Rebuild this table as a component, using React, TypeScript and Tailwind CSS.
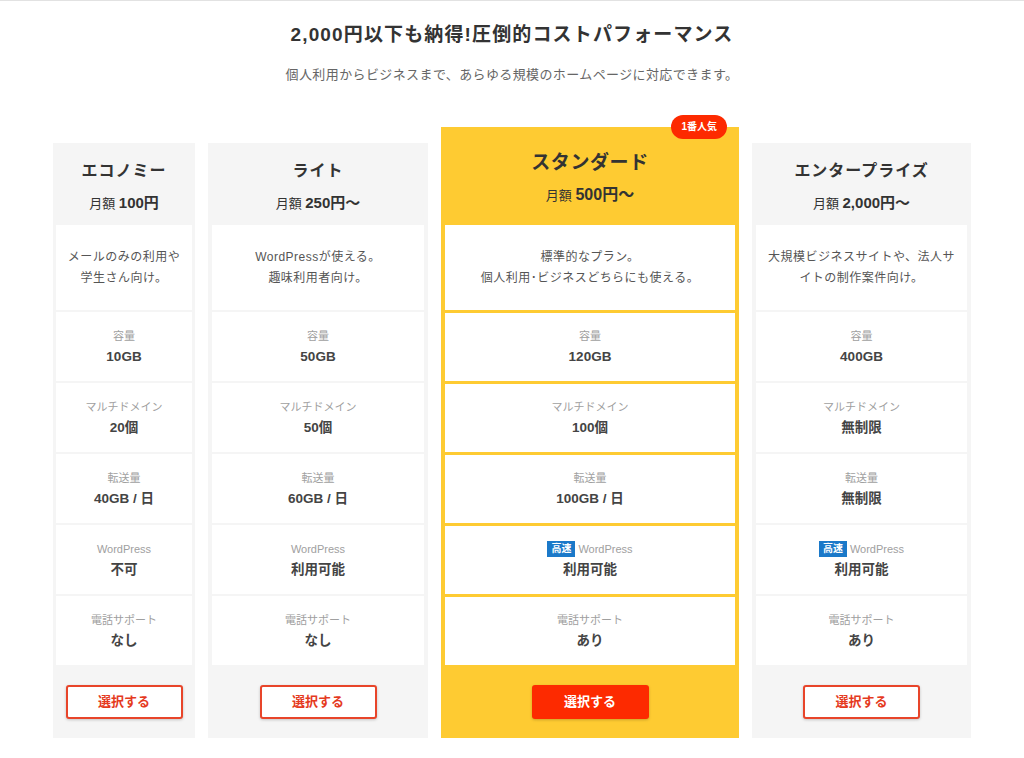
const font = { fontFamily: '"Liberation Sans", "Noto Sans CJK JP", sans-serif' };

type Spec = { label: string; value: string; fast?: boolean };

type Plan = {
  name: string;
  price: string;
  suffix: string;
  desc: string[];
  specs: Spec[];
  width: string;
  pad: string;
  featured?: boolean;
};

const plans: Plan[] = [
  {
    name: 'エコノミー',
    price: '100円',
    suffix: '',
    desc: ['メールのみの利用や', '学生さん向け。'],
    specs: [
      { label: '容量', value: '10GB' },
      { label: 'マルチドメイン', value: '20個' },
      { label: '転送量', value: '40GB / 日' },
      { label: 'WordPress', value: '不可' },
      { label: '電話サポート', value: 'なし' },
    ],
    width: 'w-[142px]',
    pad: 'px-[3px]',
  },
  {
    name: 'ライト',
    price: '250円',
    suffix: '〜',
    desc: ['WordPressが使える。', '趣味利用者向け。'],
    specs: [
      { label: '容量', value: '50GB' },
      { label: 'マルチドメイン', value: '50個' },
      { label: '転送量', value: '60GB / 日' },
      { label: 'WordPress', value: '利用可能' },
      { label: '電話サポート', value: 'なし' },
    ],
    width: 'w-[220px]',
    pad: 'px-[4px]',
  },
  {
    name: 'スタンダード',
    price: '500円',
    suffix: '〜',
    desc: ['標準的なプラン。', '個人利用･ビジネスどちらにも使える。'],
    specs: [
      { label: '容量', value: '120GB' },
      { label: 'マルチドメイン', value: '100個' },
      { label: '転送量', value: '100GB / 日' },
      { label: 'WordPress', value: '利用可能', fast: true },
      { label: '電話サポート', value: 'あり' },
    ],
    width: 'w-[298px]',
    pad: 'px-[4px]',
    featured: true,
  },
  {
    name: 'エンタープライズ',
    price: '2,000円',
    suffix: '〜',
    desc: ['大規模ビジネスサイトや、法人サ', 'イトの制作案件向け。'],
    specs: [
      { label: '容量', value: '400GB' },
      { label: 'マルチドメイン', value: '無制限' },
      { label: '転送量', value: '無制限' },
      { label: 'WordPress', value: '利用可能', fast: true },
      { label: '電話サポート', value: 'あり' },
    ],
    width: 'w-[219px]',
    pad: 'px-[4px]',
  },
];

const PlanCard = ({ plan }: { plan: Plan }) => {
  const f = plan.featured;
  return (
    <div className={`relative flex flex-col ${plan.width} ${f ? 'bg-[#fecb32]' : 'bg-[#f5f5f5]'}`}>
      {f && (
        <span className="absolute -top-[12px] right-[12px] h-[24px] px-[10px] rounded-full bg-[#fd2a00] text-white text-[10px] font-bold leading-[24px]">
          1番人気
        </span>
      )}
      <div className={`flex flex-col items-center ${f ? 'h-[98px] pt-[22px]' : 'h-[82px] pt-[16px]'}`}>
        <p className={`font-bold text-[#333] ${f ? 'text-[19px] leading-[28px] tracking-[0.03em]' : 'text-[16px] leading-[24px] tracking-[0.06em]'}`}>
          {plan.name}
        </p>
        <p className={`text-[#333] leading-[24px] ${f ? 'mt-[6px]' : 'mt-[8px]'}`}>
          <span className="text-[13px]">月額 </span>
          <span className={`font-bold ${f ? 'text-[16px]' : 'text-[15px]'}`}>
            {plan.price}
            {plan.suffix}
          </span>
        </p>
      </div>
      <div className={`flex flex-col ${plan.pad} ${f ? 'gap-[3px]' : 'gap-[2px]'}`}>
        <div className="h-[85px] bg-white flex flex-col items-center justify-center text-[12px] leading-[21px] text-[#555] tracking-[0.04em] text-center">
          {plan.desc.map((d) => (
            <span key={d}>{d}</span>
          ))}
        </div>
        {plan.specs.map((s) => (
          <div
            key={s.label}
            className={`${f ? 'h-[68px]' : 'h-[69px]'} bg-white flex flex-col items-center justify-center`}
          >
            <p className="flex items-center gap-[3px] text-[11px] leading-[18px] text-[#a0a0a0]">
              {s.fast && (
                <span className="h-[16px] px-[4px] bg-[#1b79c9] text-white text-[10px] font-bold leading-[16px]">
                  高速
                </span>
              )}
              {s.label}
            </p>
            <p className="mt-[2px] text-[13.5px] leading-[20px] font-bold text-[#444]">{s.value}</p>
          </div>
        ))}
      </div>
      <div className="h-[73px] flex items-center justify-center">
        <button
          className={`w-[117px] h-[34px] rounded-[3px] text-[13px] font-bold shadow-[0_1px_3px_rgba(0,0,0,0.2)] ${
            f ? 'bg-[#fd2a00] text-white' : 'bg-white text-[#e53a1e] border-2 border-[#e8452a]'
          }`}
        >
          選択する
        </button>
      </div>
    </div>
  );
};

export default function App() {
  return (
    <div className="w-[1024px] h-[758px] bg-white border-t border-[#e2e2e2] flex flex-col items-center" style={font}>
      <h1 className="mt-[20px] text-[19px] leading-[28px] font-bold text-[#333] tracking-[0.06em]">
        2,000円以下も納得!圧倒的コストパフォーマンス
      </h1>
      <p className="mt-[16px] text-[13px] leading-[20px] text-[#666] tracking-[0.03em]">
        個人利用からビジネスまで、あらゆる規模のホームページに対応できます。
      </p>
      <div className="mt-[42px] flex items-end gap-[13px]">
        {plans.map((p) => (
          <PlanCard key={p.name} plan={p} />
        ))}
      </div>
    </div>
  );
}
